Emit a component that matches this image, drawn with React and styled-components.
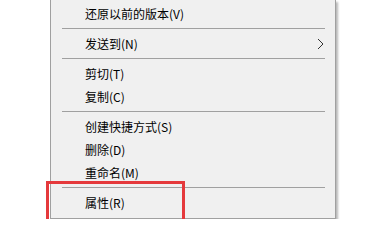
import styled, { createGlobalStyle } from 'styled-components'

const GlobalStyle = createGlobalStyle`
  html, body {
    margin: 0;
    padding: 0;
    background: #ffffff;
  }
  body {
    font-family: "Noto Sans CJK SC", "Microsoft YaHei", sans-serif;
  }
`

const items = [
  { label: '还原以前的版本(V)' },
  { sep: true },
  { label: '发送到(N)', submenu: true },
  { sep: true },
  { label: '剪切(T)' },
  { label: '复制(C)' },
  { sep: true },
  { label: '创建快捷方式(S)' },
  { label: '删除(D)' },
  { label: '重命名(M)' },
  { sep: true },
  { label: '属性(R)', marked: true },
]

const Page = () => {
  return (
    <>
      <GlobalStyle />
      <Menu>
        {items.map((item, i) =>
          item.sep ? (
            <Separator key={i} />
          ) : (
            <Item key={i}>
              <Label>{item.label}</Label>
              {item.submenu && (
                <Arrow width='7' height='12' viewBox='0 0 7 12'>
                  <path d='M1 1 L6 6 L1 11' fill='none' stroke='#333' strokeWidth='1' />
                </Arrow>
              )}
              {item.marked && <Highlight />}
            </Item>
          )
        )}
      </Menu>
    </>
  )
}

const Menu = styled.div`
  margin-left: 50px;
  width: 286px;
  box-sizing: border-box;
  background: #f0f0f0;
  border: 1px solid #a0a0a0;
  border-top: none;
  padding: 2px 0 4px;
  box-shadow: 2px 2px 2px rgba(0, 0, 0, 0.28);
`

const Item = styled.div`
  position: relative;
  height: 23px;
  display: flex;
  align-items: center;
  padding-left: 34px;
  padding-right: 11px;
`

const Label = styled.span`
  flex: 1;
  font-size: 12px;
  color: #000;
  line-height: 23px;
  white-space: nowrap;
`

const Arrow = styled.svg`
  display: block;
`

const Separator = styled.div`
  height: 1px;
  background: #a0a0a0;
  margin: 3px 10px 3px 11px;
`

const Highlight = styled.div`
  position: absolute;
  left: -5px;
  top: -10px;
  width: 139px;
  height: 42px;
  box-sizing: border-box;
  border: 3px solid #e5393c;
  pointer-events: none;
`

export default Page
